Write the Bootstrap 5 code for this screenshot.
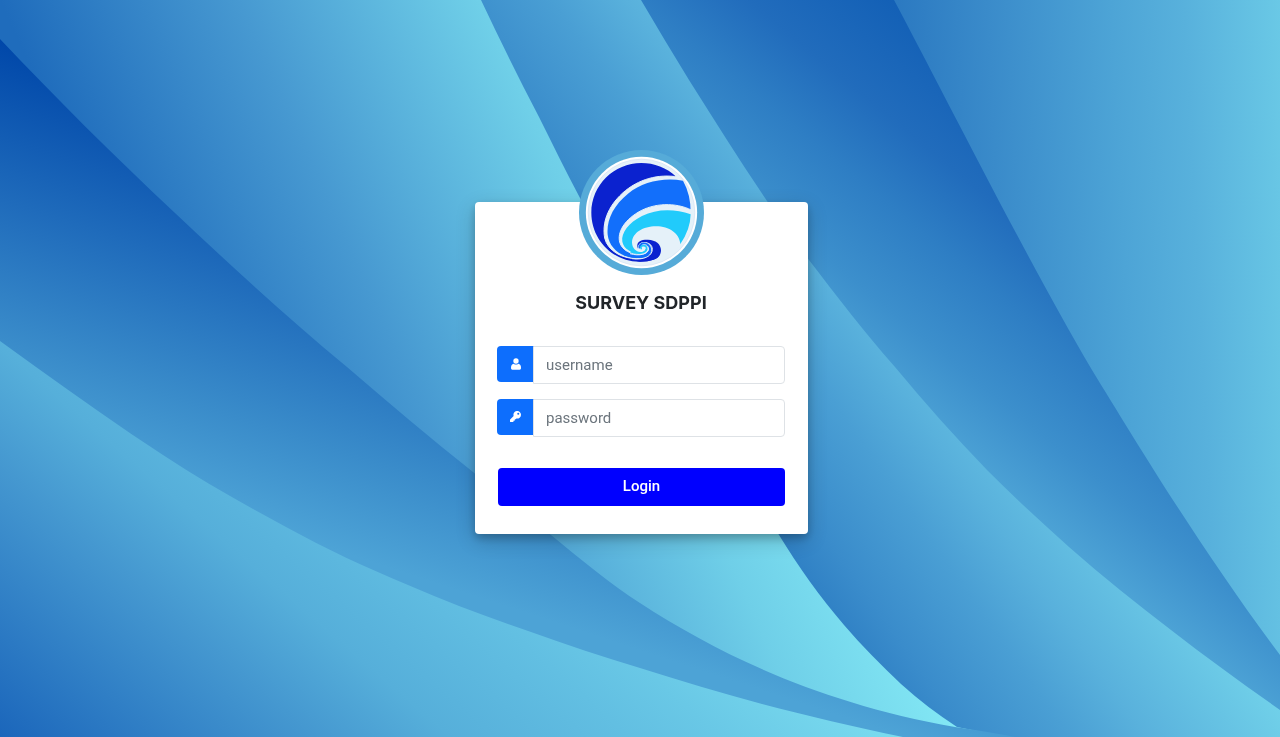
<!DOCTYPE html>
<html lang="id">
<head>
<meta charset="utf-8">
<meta name="viewport" content="width=device-width, initial-scale=1">
<title>Survey SDPPI</title>
<link rel="stylesheet" href="https://cdn.jsdelivr.net/npm/bootstrap@5.3.0/dist/css/bootstrap.min.css">
<style>
body { font-family: Inter, "Liberation Sans", sans-serif; background: #489dd3; }
.backdrop { z-index: -1; }
.login-wrap { padding: 0 0 2px 3px; }
.login-card { width: 333px; max-width: 100%; padding: 0 23px 28px 22px; border: 0; border-radius: 4px;
  box-shadow: 0 4px 8px rgba(0,0,0,.2), 0 6px 20px rgba(0,0,0,.19); }
.logo { width: 125px; height: 125px; margin-top: -52px; }
.login-title { font-size: 18px; line-height: 24px; margin: 16px 0 31px; }
.login-field { margin-bottom: 15px; }
.login-field .input-group-text { width: 37px; height: 36px; padding: 0; background: #0d6efd; border: 0; border-radius: 4px; }
.login-field .form-control { height: 38px; padding: 6px 12px; font-family: Roboto, sans-serif; font-size: 15px; border-color: #dee2e6; border-radius: 4px; }
.login-field .form-control::placeholder { color: #6c757d; }
.login-btn { height: 38px; margin: 16px 0 0 1px; padding: 0; font-family: Roboto, sans-serif; font-size: 15px; font-weight: 500; background: #00f; color: #fff; border-radius: 4px; }
.login-btn:hover { background: #0000d0; color: #fff; }
</style>
</head>
<body>
<svg class="backdrop position-fixed top-0 start-0 w-100 h-100" viewBox="0 0 1280 737" preserveAspectRatio="xMidYMid slice" aria-hidden="true">
  <defs>
    <linearGradient id="g1" gradientUnits="userSpaceOnUse" x1="0" y1="737" x2="386" y2="291">
      <stop offset="0" stop-color="#1b66bb"/><stop offset=".35" stop-color="#4598d0"/><stop offset=".5" stop-color="#56afda"/><stop offset=".7" stop-color="#62bfe2"/><stop offset=".8" stop-color="#69c8e6"/><stop offset="1" stop-color="#7adcef"/>
    </linearGradient>
    <linearGradient id="g2" gradientUnits="userSpaceOnUse" x1="0" y1="39" x2="-119" y2="401">
      <stop offset="0" stop-color="#0047a9"/><stop offset=".4" stop-color="#1f6bbb"/><stop offset=".75" stop-color="#3a8cca"/><stop offset="1" stop-color="#4da3d6"/>
    </linearGradient>
    <linearGradient id="g3" gradientUnits="userSpaceOnUse" x1="0" y1="0" x2="522" y2="-235">
      <stop offset="0" stop-color="#1f6cbc"/><stop offset=".38" stop-color="#4799d1"/><stop offset=".76" stop-color="#6fcfe8"/><stop offset="1" stop-color="#82e7f4"/>
    </linearGradient>
    <linearGradient id="g4" gradientUnits="userSpaceOnUse" x1="400" y1="0" x2="655" y2="-179">
      <stop offset="0" stop-color="#3081c5"/><stop offset=".13" stop-color="#3a8ccb"/><stop offset=".4" stop-color="#4a9fd4"/><stop offset=".6" stop-color="#59b1dc"/><stop offset="1" stop-color="#70d0e9"/>
    </linearGradient>
    <linearGradient id="g5" gradientUnits="userSpaceOnUse" x1="894" y1="0" x2="697" y2="240">
      <stop offset="0" stop-color="#1360b6"/><stop offset=".3" stop-color="#216cbc"/><stop offset=".52" stop-color="#2e7ec4"/><stop offset=".78" stop-color="#3c8fcc"/><stop offset="1" stop-color="#4ca2d5"/>
    </linearGradient>
    <linearGradient id="g6" gradientUnits="userSpaceOnUse" x1="894" y1="0" x2="1280" y2="-20">
      <stop offset="0" stop-color="#2b79c1"/><stop offset=".24" stop-color="#3a8bca"/><stop offset=".56" stop-color="#4da4d6"/><stop offset=".75" stop-color="#58b1dc"/><stop offset="1" stop-color="#6ac9e6"/>
    </linearGradient>
  </defs>
  <rect width="1280" height="737" fill="url(#g6)"/>
  <path fill="url(#g5)" d="M0 0H894C955 115 1030 265 1092 370C1135 440 1200 548 1280 655V737H0Z"/>
  <path fill="url(#g4)" d="M0 0H641C657 27 673 54 689 80C715 121 740 161 767 201C782 223 795 241 809 260C838 298 865 333 895 367C925 403 955 437 987 470C1014 497 1041 522 1069 547C1103 577 1137 604 1171 630C1207 658 1243 684 1280 710V737H0Z"/>
  <path fill="url(#g3)" d="M0 0H481C500 40 519 79 539 117C553 145 566 172 580 198C650 330 705 424 779 535C798 566 820 597 844 625C862 646 881 665 901 684C919 700 937 714 957 727L1007 737H0Z"/>
  <path fill="url(#g2)" d="M0 39C54 96 113 155 175 213C230 265 287 317 347 367C388 402 430 438 473 472C500 494 525 515 551 535C580 559 612 585 640 603C720 655 820 703 955 727Q990 732 1015 737H0Z"/>
  <path fill="url(#g1)" d="M0 341L36 367C78 397 120 427 163 455C204 482 245 505 286 527C326 549 367 568 408 585C449 603 490 618 531 632C567 645 603 657 640 668C681 681 721 693 762 704C808 716 854 727 903 737H0Z"/>
</svg>

<main class="login-wrap min-vh-100 d-flex align-items-center justify-content-center">
  <section class="login-card card">
    <svg class="logo align-self-center" viewBox="27 22 375 375" role="img" aria-label="Logo SDPPI">
      <circle cx="214.500" cy="209.500" r="187.500" fill="#56abd8"/>
      <circle cx="214.500" cy="209.500" r="167" fill="#fff"/>
      <circle cx="214.500" cy="209.500" r="160" fill="#e5f1f9" stroke="#d3e1f3" stroke-width="2"/>
      <path fill="#0b22cf" d="M320 104C290 74 252 61 214 61C132 61 64 128 64 210C64 292 130 357 208 357C250 357 273 346 273 322C273 302 254 291 234 291C214 291 202 301 204 316L150 330L103 250Q150 110 320 104Z"/>
      <path fill="#e5f1f9" stroke="#e5f1f9" stroke-width="3" d="M325 103C265 93 205 109 158 151C112 193 96 242 104 286C113 325 157 348 199 348C228 348 246 338 246 321C246 309 239 301 227 300L350 250V150Z"/>
      <path fill="#126ffb" d="M339 114C277 104 218 118 174 153C130 189 109 232 113 276C117 316 155 345 198 346C227 346 243 336 243 321C243 311 236 304 227 303L210 318L300 230L362 209Q362 155 339 114Z"/>
      <path fill="#e5f1f9" stroke="#e5f1f9" stroke-width="3" d="M364 202C317 179 252 180 204 209C161 235 142 270 149 298C155 323 184 336 211 335C228 334 237 327 236 316C235 309 230 305 223 305L240 280L330 304L362 250Z"/>
      <path fill="#21cbfb" d="M362 215C314 198 260 198 216 220C176 240 153 271 157 297C161 319 185 332 209 332C225 332 233 325 232 317C231 311 227 308 220 308L215 318L240 290L331 304Q361 261 362 215Z"/>
      <path fill="#e5f1f9" d="M331 304C329 273 298 251 258 251C219 251 187 271 186 299C186 316 198 328 211 328C222 328 228 322 226 315C224 310 219 309 215 312L273 340Q308 340 331 304Z"/>
      <path fill="#0b22cf" d="M204 318C196 299 211 290 234 291C257 292 273 304 273 323C273 346 251 357 210 357L185 352C222 353 246 340 246 320C246 306 235 299 222 299C211 299 203 305 204 318Z"/>
      <path fill="none" stroke="#e5f1f9" stroke-width="3" d="M186 348C222 353 247 340 247 320C247 306 235 299 222 300C211 300 204 307 207 316C209 323 218 324 221 318"/>
      <path fill="none" stroke="#126ffb" stroke-width="7" d="M160 333C187 345 218 346 233 336C245 326 241 308 226 304C214 301 206 309 210 317"/>
      <path fill="none" stroke="#e5f1f9" stroke-width="3" d="M180 333C208 341 232 335 235 320C237 309 224 302 216 308"/>
      <path fill="none" stroke="#21cbfb" stroke-width="5" d="M182 327C205 335 227 332 230 320C231 313 226 308 219 309C212 310 211 316 215 319"/>
    </svg>
    <h1 class="login-title text-center fw-bold">SURVEY SDPPI</h1>
    <form>
      <div class="login-field input-group align-items-start">
        <label class="input-group-text justify-content-center" for="username">
          <svg width="10" height="12" viewBox="0 0 30 36" fill="#fff" role="img" aria-label="Username"><circle cx="15" cy="9" r="8"/><path d="M8 17Q15 22 22 17Q30 19 30 29V31Q30 35 26 35H4Q0 35 0 31V29Q0 19 8 17Z"/></svg>
        </label>
        <input class="form-control" id="username" type="text" placeholder="username" autocomplete="username">
      </div>
      <div class="login-field input-group align-items-start">
        <label class="input-group-text justify-content-center" for="password">
          <svg width="11" height="11" viewBox="0 0 512 512" fill="#fff" role="img" aria-label="Password"><path d="M512 177A176 176 0 0 1 299 349L275 376Q268 384 257 384H224V424Q224 448 200 448H160V488Q160 512 136 512H24Q0 512 0 488V410Q0 400 7 393L169 231A176 176 0 1 1 512 177ZM336 128A48 48 0 1 0 432 128A48 48 0 1 0 336 128Z"/></svg>
        </label>
        <input class="form-control" id="password" type="password" placeholder="password" autocomplete="current-password">
      </div>
      <div class="d-grid">
        <button class="login-btn btn" type="submit">Login</button>
      </div>
    </form>
  </section>
</main>
<script src="https://cdn.jsdelivr.net/npm/bootstrap@5.3.0/dist/js/bootstrap.bundle.min.js"></script>
</body>
</html>
